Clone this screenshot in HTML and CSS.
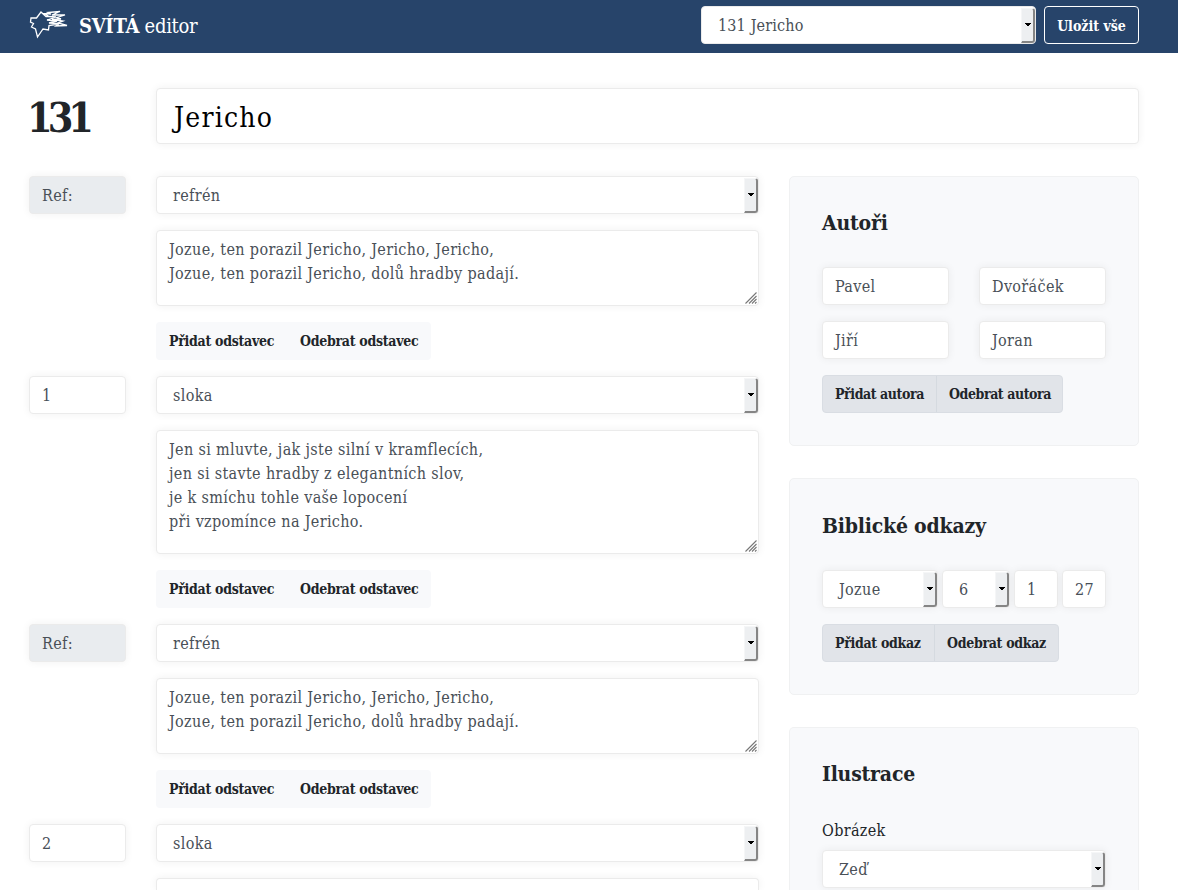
FILE: index.html
```
<!DOCTYPE html>
<html lang="cs">
<head>
<meta charset="utf-8">
<title>SVÍTÁ editor</title>
<link rel="stylesheet" href="styles.css">
</head>
<body>
<svg class="defs" width="0" height="0">
  <symbol id="caret" viewBox="0 0 6 4"><path d="M0 0h6v1h-1v1h-1v1h-2v-1h-1v-1h-1z"/></symbol>
  <symbol id="grip" viewBox="0 0 12 12"><path d="M.5 11.5l11-11M4 11.5l7.500-7.500M7 11.5l4.500-4.500M10 11.5l1.500-1.500" fill="none" stroke="#777" stroke-width="1.100"/></symbol>
</svg>
<header class="navbar">
  <div class="brand">
    <svg class="logo" viewBox="0 0 40 30" width="40" height="30"><path d="M12 2L17 6.500H20L15.500 3.500L22 4L19 2.500L31 1.500L23 5L36 5L28 7.500L32 9L23 9.500L34 11L29 13L38 15.500L27 16L30 14L20 15.500L19.500 20L14 19L8.500 27L6.500 19L2.500 17L4.500 13.500L1.500 12L2 8L7.500 8Z M20 6.500L27 7L18 10L28 11L20 13L30 13.500"/></svg>
    <span class="title"><b>SVÍTÁ</b> editor</span>
  </div>
  <div class="select songs"><span>131 Jericho</span><i><svg><use href="#caret"/></svg></i></div>
  <button class="save">Uložit vše</button>
</header>
<div class="heading">
  <h1>131</h1>
  <div class="song-name">Jericho</div>
</div>
<main class="layout">
  <section class="verses">
    <div class="verse">
      <div class="input disabled">Ref:</div>
      <div class="body">
        <div class="select"><span>refrén</span><i><svg><use href="#caret"/></svg></i></div>
        <div class="text chorus">Jozue, ten porazil Jericho, Jericho, Jericho,<br>Jozue, ten porazil Jericho, dolů hradby padají.<svg class="grip"><use href="#grip"/></svg></div>
        <div class="group light"><button class="b1">Přidat odstavec</button><button>Odebrat odstavec</button></div>
      </div>
    </div>
    <div class="verse">
      <div class="input">1</div>
      <div class="body">
        <div class="select"><span>sloka</span><i><svg><use href="#caret"/></svg></i></div>
        <div class="text stanza">Jen si mluvte, jak jste silní v kramflecích,<br>jen si stavte hradby z elegantních slov,<br>je k smíchu tohle vaše lopocení<br>při vzpomínce na Jericho.<svg class="grip"><use href="#grip"/></svg></div>
        <div class="group light"><button class="b1">Přidat odstavec</button><button>Odebrat odstavec</button></div>
      </div>
    </div>
    <div class="verse">
      <div class="input disabled">Ref:</div>
      <div class="body">
        <div class="select"><span>refrén</span><i><svg><use href="#caret"/></svg></i></div>
        <div class="text chorus">Jozue, ten porazil Jericho, Jericho, Jericho,<br>Jozue, ten porazil Jericho, dolů hradby padají.<svg class="grip"><use href="#grip"/></svg></div>
        <div class="group light"><button class="b1">Přidat odstavec</button><button>Odebrat odstavec</button></div>
      </div>
    </div>
    <div class="verse">
      <div class="input">2</div>
      <div class="body">
        <div class="select"><span>sloka</span><i><svg><use href="#caret"/></svg></i></div>
        <div class="text last"></div>
      </div>
    </div>
  </section>
  <aside class="panels">
    <section class="card authors">
      <h2>Autoři</h2>
      <div class="names">
        <div class="input">Pavel</div><div class="input">Dvořáček</div>
        <div class="input">Jiří</div><div class="input">Joran</div>
      </div>
      <div class="group gray author-actions"><button class="b1">Přidat autora</button><button>Odebrat autora</button></div>
    </section>
    <section class="card bible">
      <h2>Biblické odkazy</h2>
      <div class="reference">
        <div class="select"><span>Jozue</span><i><svg><use href="#caret"/></svg></i></div>
        <div class="select"><span>6</span><i><svg><use href="#caret"/></svg></i></div>
        <div class="input">1</div><div class="input">27</div>
      </div>
      <div class="group gray link-actions"><button class="b1">Přidat odkaz</button><button>Odebrat odkaz</button></div>
    </section>
    <section class="card picture">
      <h2>Ilustrace</h2>
      <div class="label">Obrázek</div>
      <div class="select"><span>Zeď</span><i><svg><use href="#caret"/></svg></i></div>
    </section>
  </aside>
</main>
</body>
</html>
```
FILE: styles.css
```
* { box-sizing: border-box; }
html, body { height: 890px; overflow: hidden; }
body, button { font-family: "Roboto Slab", "DejaVu Serif Condensed", "DejaVu Serif", serif; font-stretch: condensed; }
body { margin: 0; background: #fff; color: #212529; font-size: 16px; line-height: 24px; letter-spacing: .34px; }
.defs { display: block; height: 0; }
.navbar { display: flex; height: 53px; background: #27446a; padding: 6px 39px 9px 29px; }
.brand { display: flex; flex: 1; color: #fff; }
.logo { margin-top: 4px; fill: none; stroke: #fff; stroke-width: 1.300; }
.title { margin-left: 10px; font-size: 20px; line-height: 40px; white-space: nowrap; letter-spacing: -.3px; }
.select, .input, .text, .song-name { border: 1px solid #ebebeb; border-radius: 4px; background: #fff; color: #495057; box-shadow: 0 0 8px rgba(0, 0, 0, .06); }
.select { display: flex; justify-content: space-between; height: 38px; padding-left: 16px; line-height: 38px; white-space: nowrap; }
.select i { display: flex; align-items: center; justify-content: center; width: 14px; height: 35px; margin-top: 1px; background: #edeff1; border: solid; border-width: 1px 2px 2px 1px; border-color: #f5f6f7 #858585 #858585 #f5f6f7; border-radius: 0 3px 3px 0; }
.select i svg { width: 6px; height: 4px; margin-left: 1px; }
.songs { width: 335px; margin-right: 8px; box-shadow: none; letter-spacing: .15px; }
.save { width: 95px; height: 38px; padding: 1px 0 0; border: 1px solid #fff; border-radius: 4px; background: none; color: #fff; font-size: 14px; font-weight: bold; letter-spacing: 0; }
.heading { display: flex; padding: 35px 39px 32px 29px; }
h1 { width: 127px; height: 56px; margin: 0; font-size: 41px; line-height: 61px; letter-spacing: -5px; text-indent: -2px; }
.song-name { flex: 1; height: 56px; padding-left: 17px; color: #000; font-size: 28px; line-height: 57px; letter-spacing: 1.200px; }
.layout { display: grid; grid-template-columns: 730px 350px; gap: 30px; padding: 0 39px 0 29px; }
.verses { display: flex; flex-direction: column; gap: 16px; }
.verse { display: grid; grid-template-columns: 97px 603px; gap: 30px; }
.body { display: flex; flex-direction: column; gap: 16px; }
.input { height: 38px; padding-left: 12px; line-height: 38px; }
.disabled { background: #e9ecef; }
.text { position: relative; padding: 7px 12px 5px; white-space: nowrap; }
.chorus { height: 76px; }
.stanza { height: 124px; }
.last { height: 12px; padding: 0; border-bottom: 0; border-radius: 4px 4px 0 0; }
.grip { position: absolute; right: 1px; bottom: 1px; width: 12px; height: 12px; }
.group { display: flex; height: 38px; border-radius: 4px; overflow: hidden; }
.group button { flex: 1; padding: 1px 0 0 12px; border: 0; background: none; color: #212529; text-align: left; font-size: 14px; font-weight: bold; line-height: 37px; letter-spacing: -.42px; white-space: nowrap; }
.group .b1 { flex: none; }
.light { width: 275px; background: #f8f9fb; }
.light button { padding-left: 13px; letter-spacing: -.28px; }
.light .b1 { width: 131px; padding-left: 13px; }
.gray { background: #e1e4e9; border: 1px solid #d9dde3; }
.gray button { line-height: 35px; }
.gray .b1 { border-right: 1px solid #d5dae0; }
.author-actions { width: 241px; }
.author-actions .b1 { width: 114px; }
.link-actions { width: 237px; }
.link-actions button { letter-spacing: -.3px; }
.link-actions .b1 { width: 112px; }
.panels { display: flex; flex-direction: column; gap: 32px; }
.card { padding: 32px; background: #f8f9fb; border: 1px solid #f0f1f2; border-radius: 5px; }
h2 { margin: 0; font-size: 21px; line-height: 28px; letter-spacing: -.2px; }
.authors { height: 270px; }
.names { display: grid; grid-template-columns: 127px 127px; gap: 16px 30px; margin: 30px 0 16px; }
.bible { height: 217px; padding-top: 33px; }
.reference { display: grid; grid-template-columns: 116px 68px 44px 44px; gap: 4px; margin: 30px 0 16px; }
.picture { height: 163px; padding-bottom: 0; border-bottom: 0; border-radius: 5px 5px 0 0; }
.label { margin: 31px 0 7px; }
```
